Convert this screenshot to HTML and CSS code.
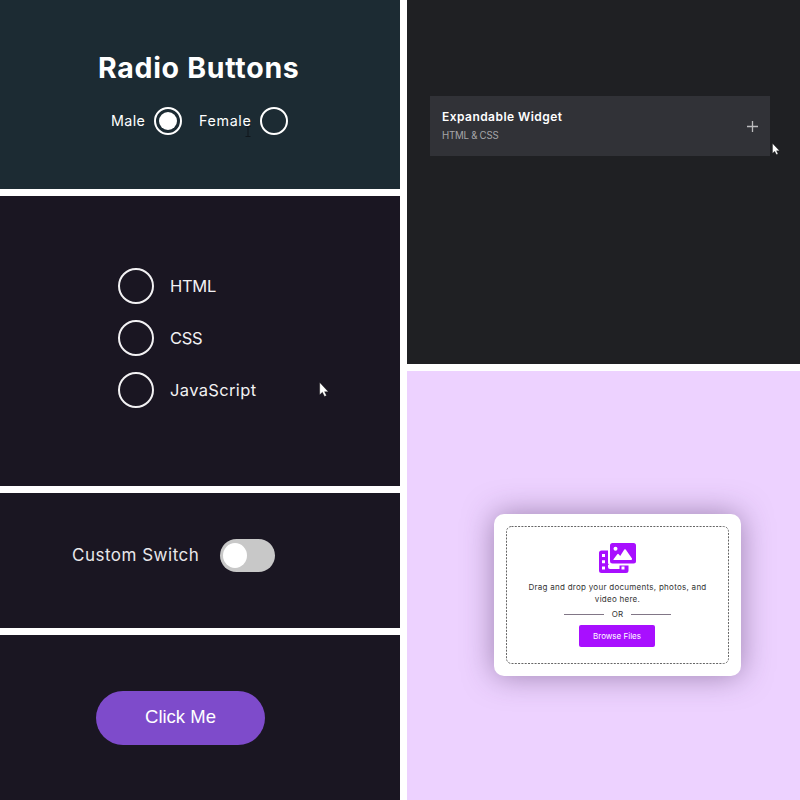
FILE: index.html
```
<!DOCTYPE html>
<html lang="en">
<head>
<meta charset="utf-8">
<title>HTML &amp; CSS components</title>
<link rel="stylesheet" href="styles.css">
</head>
<body>
<main class="board">
  <div class="column">
    <section class="panel radios">
      <h1 class="radios-title">Radio Buttons</h1>
      <div class="radios-row">
        <span class="radio-label male">Male</span><span class="radio checked"></span>
        <span class="radio-label female">Female</span><span class="radio"></span>
      </div>
      <svg class="ibeam" viewBox="0 0 6 11"><path d="M.5 .5H2.500L3 1L3.500 .5H5.500M3 1V10M.5 10.500H5.500"/></svg>
    </section>
    <section class="panel choices">
      <div class="choice"><span class="ring"></span><span class="choice-label html">HTML</span></div>
      <div class="choice"><span class="ring"></span><span class="choice-label css">CSS</span></div>
      <div class="choice"><span class="ring"></span><span class="choice-label js">JavaScript</span></div>
      <svg class="cursor choices-cursor" viewBox="0 0 9 14"><path d="M.5 .5V12L3 9.500L5 13.500L6.800 12.700L5 9H8.500Z"/></svg>
    </section>
    <section class="panel switch-panel">
      <span class="switch-label">Custom Switch</span>
      <span class="switch"><span class="knob"></span></span>
    </section>
    <section class="panel click-panel">
      <button class="click">Click Me</button>
    </section>
  </div>
  <div class="column right">
    <section class="panel widget-panel">
      <div class="widget">
        <div>
          <div class="widget-title">Expandable Widget</div>
          <div class="widget-sub">HTML &amp; CSS</div>
        </div>
        <svg class="plus" viewBox="0 0 11 11"><path d="M5.500 0V11M0 5.500H11"/></svg>
      </div>
      <svg class="cursor widget-cursor" viewBox="0 0 9 14"><path d="M.5 .5V12L3 9.500L5 13.500L6.800 12.700L5 9H8.500Z"/></svg>
    </section>
    <section class="panel upload-panel">
      <div class="card">
        <div class="dropzone">
          <svg class="dashes" viewBox="0 0 223 138"><rect x=".5" y=".5" width="222" height="137" rx="5"/></svg>
          <svg class="photos" viewBox="0 0 37 30">
            <path fill="#a80fff" fill-rule="evenodd" d="M2.500 7.500H9V19.500Q9 22.500 12 22.500H29.500V27.500Q29.500 30 27 30H2.500Q0 30 0 27.500V10Q0 7.500 2.500 7.500ZM3 11V14H6V11ZM3 17.300V20.300H6V17.300ZM3 23.500V26.500H6V23.500ZM22.500 23.500V26.500H25.500V23.500Z"/>
            <path fill="#fff" d="M9 22H20.500V26H11Q9 26 9 24Z"/>
            <rect x="11" width="26" height="20.500" rx="2.500" fill="#a80fff"/>
            <circle cx="16.500" cy="5.800" r="2" fill="#fff"/>
            <path fill="#fff" d="M14.300 16.600L18.300 11.200Q19 10.400 19.700 11.200L21.200 13L25.300 6.600Q26 5.700 26.700 6.600L33 15.600Q33.400 16.800 32.200 16.900H14.700Z"/>
          </svg>
          <p class="drop-text">Drag and drop your documents, photos, and<br>video here.</p>
          <div class="or"><span class="rule"></span><span class="or-text">OR</span><span class="rule"></span></div>
          <button class="browse">Browse Files</button>
        </div>
      </div>
    </section>
  </div>
</main>
</body>
</html>
```
FILE: styles.css
```
* { box-sizing: border-box; }
body { margin: 0; background: #fff; font-family: Inter, sans-serif; }
button { border: 0; padding: 0; color: #fff; }
.board { display: grid; grid-template-columns: 400px 393px; gap: 7px; width: 800px; height: 800px; overflow: hidden; }
.column { display: grid; grid-template-rows: 189px 290px 135px 165px; gap: 7px; }
.right { grid-template-rows: 364px 429px; }
.panel { position: relative; background: #1a1622; overflow: hidden; white-space: nowrap; }
.radios { background: #1c2b33; color: #fff; padding-top: 50px; }
.radios-title { margin: 0 0 0 98px; font-size: 28.500px; line-height: 36px; font-weight: 700; letter-spacing: .7px; }
.radios-row { display: flex; align-items: center; height: 28px; margin: 21px 0 0 111px; }
.radio-label { font-size: 14.300px; line-height: 28px; }
.male { width: 43px; letter-spacing: .4px; }
.female { width: 62px; margin-left: 16px; padding-left: 1px; letter-spacing: .65px; }
.radio { width: 28px; height: 28px; border: 2px solid #fff; border-radius: 50%; flex: none; padding: 3px; }
.checked::before { content: ""; display: block; width: 18px; height: 18px; background: #fff; border-radius: 50%; }
.ibeam { position: absolute; left: 245px; top: 126px; width: 6px; height: 11px; fill: none; stroke: #10171c; }
.choices { display: flex; flex-direction: column; gap: 16px; padding: 72px 0 0 118px; }
.choice { display: flex; align-items: center; gap: 16px; height: 36px; color: #f2f1f3; }
.ring { width: 36px; height: 36px; border: 2px solid #f2f1f3; border-radius: 50%; }
.choice-label { font-size: 16.500px; line-height: 36px; }
.html, .css { letter-spacing: -.3px; }
.js { letter-spacing: .35px; }
.cursor { position: absolute; fill: #fff; stroke: #111; stroke-width: .3; }
.choices-cursor { left: 319px; top: 186px; width: 10px; height: 15px; }
.switch-panel { display: flex; align-items: flex-start; padding: 46px 0 0 72px; color: #e8e7ea; }
.switch-label { width: 148px; font-size: 17px; line-height: 32px; letter-spacing: .5px; }
.switch { width: 55px; height: 33px; padding: 4px 3px; border-radius: 17px; background: #c8c8c8; }
.knob { display: block; width: 24px; height: 25px; border-radius: 50%; background: #fff; }
.click-panel { padding: 56px 0 0 96px; }
.click { display: block; width: 169px; height: 54px; padding-bottom: 2px; border-radius: 27px; background: #7e4bcb; font: 18.500px/50px "Liberation Sans", sans-serif; }
.widget-panel { background: #1f2023; padding: 96px 0 0 23px; }
.widget { display: flex; align-items: center; justify-content: space-between; width: 340px; height: 60px; padding: 0 12px 1px; background: #313237; }
.widget-title { font-size: 12px; line-height: 20px; font-weight: 600; letter-spacing: .45px; color: #fff; }
.widget-sub { font-size: 9.700px; line-height: 17px; letter-spacing: -.25px; color: #a5a5a8; }
.plus { width: 11px; height: 11px; margin-top: 1px; fill: none; stroke: #bcbcbe; stroke-width: 1.300; }
.widget-cursor { left: 365px; top: 143px; width: 8px; height: 12px; }
.upload-panel { background: #edd2ff; padding: 143px 0 0 87px; }
.card { width: 247px; height: 162px; padding: 12px; border-radius: 10px; background: #fff; box-shadow: 0 0 30px rgba(75, 50, 95, .5); }
.dropzone { position: relative; display: flex; flex-direction: column; align-items: center; height: 138px; padding-top: 17px; color: #333; }
.dashes { position: absolute; left: 0; top: 0; width: 223px; height: 138px; fill: none; stroke: #666; stroke-dasharray: 2 1.300; }
.photos { width: 37px; height: 30px; flex: none; }
.drop-text { margin: 8px 0 0; font-size: 8px; line-height: 12px; letter-spacing: .27px; text-align: center; }
.or { display: flex; align-items: center; gap: 8px; height: 12px; margin-top: 3px; font-size: 8px; }
.rule { width: 40px; height: 1px; background: #817686; }
.browse { flex: none; width: 76px; height: 22px; margin: 5px 1px 0 0; border-radius: 2px; background: #a80fff; font: 8px/22px Inter, sans-serif; }
```
